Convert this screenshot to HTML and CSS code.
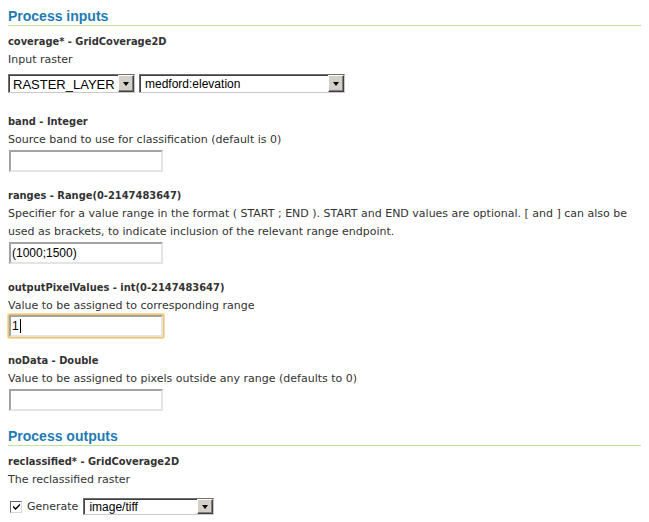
FILE: index.html
```html
<!DOCTYPE html>
<html>
<head>
<meta charset="utf-8">
<link rel="stylesheet" href="styles.css">
</head>
<body>
<div class="page">
  <h2 class="section-title">Process inputs</h2>

  <div class="param first">
    <div class="param-name">coverage* - GridCoverage2D</div>
    <div class="param-desc">Input raster</div>
    <div class="select-row">
      <div class="select sel-type"><span class="select-text upper">RASTER_LAYER</span><span class="select-btn"><span class="arrow"></span></span></div>
      <div class="select sel-layer"><span class="select-text">medford:elevation</span><span class="select-btn"><span class="arrow"></span></span></div>
    </div>
  </div>

  <div class="param after-select">
    <div class="param-name">band - Integer</div>
    <div class="param-desc">Source band to use for classification (default is 0)</div>
    <div class="textbox"></div>
  </div>

  <div class="param">
    <div class="param-name">ranges - Range(0-2147483647)</div>
    <div class="param-desc">Specifier for a value range in the format ( START ; END ). START and END values are optional. [ and ] can also be used as brackets, to indicate inclusion of the relevant range endpoint.</div>
    <div class="textbox"><span class="textbox-value">(1000;1500)</span></div>
  </div>

  <div class="param">
    <div class="param-name">outputPixelValues - int(0-2147483647)</div>
    <div class="param-desc">Value to be assigned to corresponding range</div>
    <div class="textbox focused"><span class="textbox-value">1</span><span class="caret"></span></div>
  </div>

  <div class="param">
    <div class="param-name">noData - Double</div>
    <div class="param-desc">Value to be assigned to pixels outside any range (defaults to 0)</div>
    <div class="textbox"></div>
  </div>

  <h2 class="section-title outputs">Process outputs</h2>

  <div class="param first">
    <div class="param-name">reclassified* - GridCoverage2D</div>
    <div class="param-desc">The reclassified raster</div>
    <div class="generate-row">
      <span class="checkbox"><svg width="9" height="9" viewBox="0 0 9 9"><path d="M1 3.5 L3.5 6 L8 1.5 L8 3.5 L3.5 8 L1 5.5 Z" fill="#000"/></svg></span>
      <span class="generate-label">Generate</span>
      <div class="select sel-format"><span class="select-text">image/tiff</span><span class="select-btn"><span class="arrow"></span></span></div>
    </div>
  </div>
</div>
</body>
</html>
```

FILE: styles.css
```css
html, body {
  margin: 0;
  padding: 0;
  background: #ffffff;
}

body {
  font-family: "DejaVu Sans", Verdana, sans-serif;
  font-size: 11px;
  color: #333333;
}

.page {
  padding: 0 8px;
}

.section-title {
  margin: 7px 0 0;
  font-family: "Liberation Sans", Arial, sans-serif;
  font-size: 14px;
  line-height: 18px;
  font-weight: bold;
  color: #1f7bb3;
  border-bottom: 1px solid #c3df9c;
}

.section-title.outputs {
  margin-top: 16px;
}

.param {
  margin-top: 13px;
}

.param.first {
  margin-top: 5px;
}

.param.after-select {
  margin-top: 18px;
}

.param-name {
  font-family: "DejaVu Sans Condensed", "DejaVu Sans", sans-serif;
  font-weight: bold;
  line-height: 18px;
  padding-top: 2px;
  color: #333333;
}

.param-desc {
  line-height: 18px;
  color: #333333;
}

.textbox {
  box-sizing: border-box;
  margin: 1px 0 0 1px;
  width: 154px;
  height: 22px;
  border-top: 2px solid #a3a3a3;
  border-left: 2px solid #a3a3a3;
  border-right: 2px solid #e4e4e4;
  border-bottom: 2px solid #e4e4e4;
  background: #ffffff;
  display: flex;
  align-items: center;
  padding-left: 1px;
  font-family: "Liberation Sans", Arial, sans-serif;
  font-size: 12px;
  color: #000;
}

.textbox.focused {
  margin-top: 0;
  box-shadow: 0 0 0 1px #f2c36a, 0 0 0 2px #f7dca6;
  border-radius: 1px;
}

.caret {
  display: inline-block;
  width: 1px;
  height: 14px;
  background: #000;
  margin-left: 1px;
}

.select-row {
  display: flex;
  gap: 4px;
  margin-top: 5px;
}

.select {
  box-sizing: border-box;
  height: 19px;
  display: flex;
  align-items: stretch;
  border: 1px solid #6f6f6f;
  border-right-color: #c9c9c9;
  border-bottom-color: #c9c9c9;
  background: #ffffff;
  color: #000;
  font-family: "Liberation Sans", Arial, sans-serif;
  font-size: 12px;
}

.sel-type { width: 127px; }
.sel-layer { width: 206px; }
.sel-format { width: 131px; height: 17px; }

.select-text {
  flex: 1;
  display: flex;
  align-items: center;
  padding-left: 4px;
  white-space: nowrap;
  overflow: hidden;
  border-top: 1px solid #404040;
  border-left: 1px solid #404040;
}

.select-text.upper {
  font-size: 13px;
  padding-left: 3px;
}

.select-btn {
  box-sizing: border-box;
  width: 16px;
  background: #d4d0c8;
  border-top: 1px solid #ffffff;
  border-left: 1px solid #ffffff;
  border-right: 1px solid #404040;
  border-bottom: 1px solid #404040;
  box-shadow: inset -1px -1px 0 #808080;
  display: flex;
  align-items: center;
  justify-content: center;
}

.arrow {
  width: 0;
  height: 0;
  border-left: 3.5px solid transparent;
  border-right: 3.5px solid transparent;
  border-top: 4px solid #000;
}

.generate-row {
  display: flex;
  align-items: center;
  margin-top: 9px;
}

.checkbox {
  box-sizing: border-box;
  width: 12px;
  height: 12px;
  margin-left: 2px;
  border-top: 1px solid #6a6a6a;
  border-left: 1px solid #6a6a6a;
  border-right: 1px solid #d8d8d8;
  border-bottom: 1px solid #d8d8d8;
  background: #fff;
  display: flex;
  align-items: center;
  justify-content: center;
}

.generate-label {
  margin-left: 5px;
  margin-right: 5px;
  color: #333;
}
```
